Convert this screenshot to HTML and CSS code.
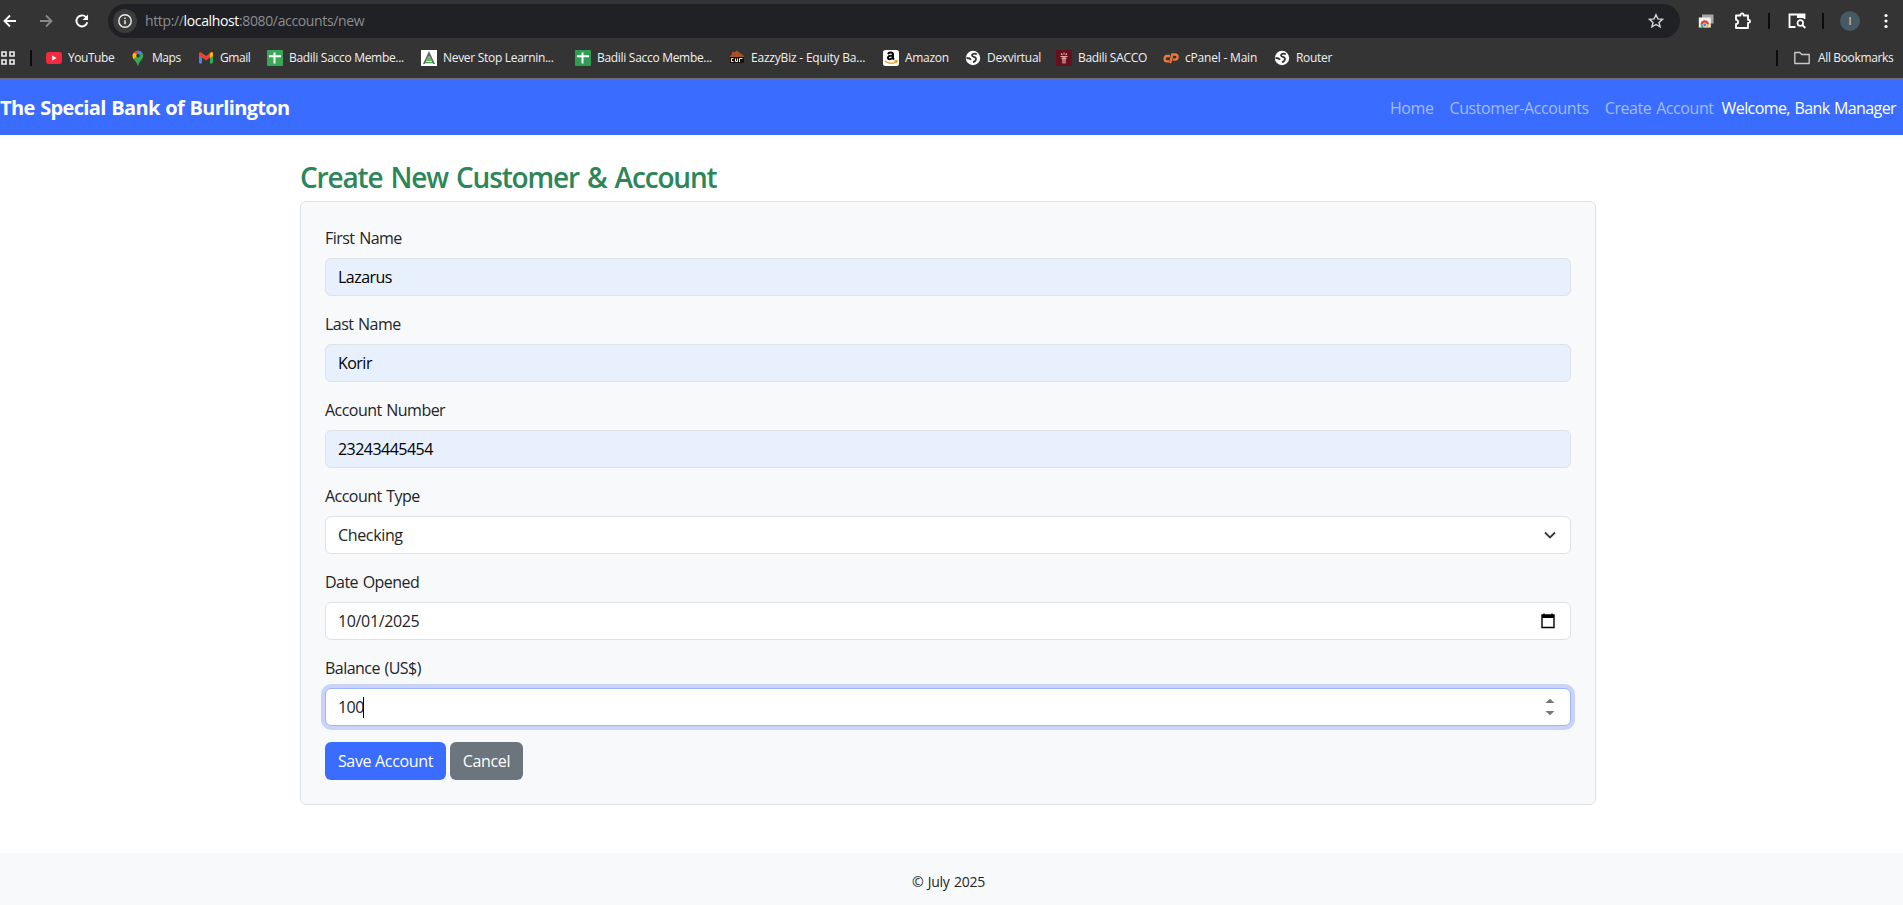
FILE: index.html
```html
<!DOCTYPE html>
<html lang="en">
<head>
<meta charset="utf-8">
<title>Create New Customer &amp; Account</title>
<link rel="stylesheet" href="styles.css">
</head>
<body>
<header class="chrome">
  <div class="toolbar">
    <svg class="tool-back" width="16" height="16" viewBox="0 0 16 16"><path d="M14 8H3M8 2.500 2.500 8 8 13.500" fill="none" stroke="#fff" stroke-width="1.800"/></svg>
    <svg class="tool-forward" width="16" height="16" viewBox="0 0 16 16"><path d="M2 8h11M8 2.500 13.500 8 8 13.500" fill="none" stroke="#8a8a8a" stroke-width="1.800"/></svg>
    <svg class="tool-reload" width="16" height="16" viewBox="0 0 16 16"><path d="M13.300 9.200A5.500 5.500 0 1 1 12 4.200L13.500 5.700" fill="none" stroke="#fff" stroke-width="1.900"/><path d="M14 1.500V7H8.500z" fill="#fff"/></svg>
    <div class="address">
      <span class="site-info"><svg width="16" height="16" viewBox="0 0 16 16"><circle cx="8" cy="8" r="6.200" fill="none" stroke="#eee" stroke-width="1.400"/><path d="M8 7.200v4M8 4.500v1.500" stroke="#eee" stroke-width="1.500"/></svg></span>
      <span class="url">http://<b>localhost</b>:8080/accounts/new</span>
      <svg class="star" width="16" height="16" viewBox="0 0 16 16"><path d="M8 1.700 9.900 5.900 14.500 6.300 11 9.400 12.100 13.900 8 11.500 3.900 13.900 5 9.400 1.500 6.300 6.100 5.900z" fill="none" stroke="#d5d5d5" stroke-width="1.400"/></svg>
    </div>
    <div class="tools">
      <svg width="16" height="16" viewBox="0 0 16 16"><path d="M4 1.500h11.500v9H4z" fill="#a5a5a5"/><path d="M.8 4.500h12v10h-12z" fill="#f1f1f1"/><path d="M2.500 11.500a4.300 4.300 0 0 1 8.600 0z" fill="#e34133"/><path d="M2.500 11.500h2.300l1.200 3H3.500z" fill="#34a853"/><path d="M8.800 11.500h2.300l-1 3H7.500z" fill="#fbbc04"/><circle cx="6.800" cy="11.900" r="1.900" fill="#4285f4" stroke="#fff" stroke-width=".6"/></svg>
      <svg class="tool-extensions" width="18" height="18" viewBox="0 0 18 18"><path d="M2 3.500h4.500V3a1.600 1.600 0 0 1 3.200 0v.5H14v4.300h.6a1.500 1.500 0 0 1 0 3H14V16H2v-4a2.100 2.100 0 0 0 0-4.200z" fill="none" stroke="#fff" stroke-width="1.800" stroke-linejoin="round"/></svg>
      <i class="divider before-search"></i>
      <svg class="tool-search" width="18" height="16" viewBox="0 0 18 16"><path d="M7.500 14H1.500V1.500h15V6" fill="none" stroke="#fff" stroke-width="1.800"/><path d="M9 1h8v4H9z" fill="#fff"/><circle cx="12.300" cy="10" r="2.800" fill="none" stroke="#fff" stroke-width="1.700"/><path d="m14.300 12 3 3" stroke="#fff" stroke-width="1.800"/></svg>
      <i class="divider before-avatar"></i>
      <span class="avatar">I</span>
      <svg class="tool-menu" width="4" height="16" viewBox="0 0 4 16"><g fill="#fff"><circle cx="2" cy="2.500" r="1.600"/><circle cx="2" cy="8" r="1.600"/><circle cx="2" cy="13.500" r="1.600"/></g></svg>
    </div>
  </div>
  <div class="bookmarks">
    <svg class="apps" width="16" height="16" viewBox="0 0 16 16"><path d="M2 2h4v4H2zM10 2h4v4h-4zM2 10h4v4H2zM10 10h4v4h-4z" fill="none" stroke="#eee" stroke-width="1.600"/></svg>
    <i class="divider"></i>
    <div class="bookmark-list">
      <span class="bm"><svg width="16" height="16" viewBox="0 0 16 16"><rect y="2" width="16" height="12" rx="3" fill="#f3293f"/><path d="m6.200 5.500 4.500 2.500-4.500 2.500z" fill="#fff"/></svg><span class="narrow">YouTube</span></span>
      <span class="bm bm-maps"><svg width="12" height="16" viewBox="0 0 12 16"><path d="M6 .5A5.300 5.300 0 0 0 1.900 2.400L6 6z" fill="#ea4335"/><path d="M6 .5a5.300 5.300 0 0 1 4.600 2.600L6 7z" fill="#4285f4"/><path d="M1.900 2.400A5.300 5.300 0 0 0 1.500 9L6 5z" fill="#fbbc04"/><path d="M10.600 3.100A5.500 5.500 0 0 1 11.200 6.500C10.500 10 7.500 10.500 6.500 15.500h-1C5 12.500 3 11 1.500 9z" fill="#34a853"/><path d="M3 4 1.500 9 6 6z" fill="#fbbc04"/><circle cx="6" cy="5.700" r="1.800" fill="#263238"/></svg><span class="narrow">Maps</span></span>
      <span class="bm"><svg width="16" height="16" viewBox="0 0 16 16"><path d="M1 3.500 4 5v8.500H2a1 1 0 0 1-1-1z" fill="#4285f4"/><path d="M15 3.500 12 5v8.500h2a1 1 0 0 0 1-1z" fill="#34a853"/><path d="M1 3.500C1 2 3 2 4 3l4 3 4-3c1-1 3-1 3 .5V6l-3 1.500L8 10.500 4 7.500 1 6z" fill="#ea4335"/><path d="M12 3c1-1 3-1 3 .5V6l-3 2z" fill="#fbbc04"/></svg><span class="narrow">Gmail</span></span>
      <span class="bm"><svg width="16" height="16" viewBox="0 0 16 16"><rect width="16" height="16" rx="1" fill="#3aa757"/><path d="M7.500 2.500v11M2 6.300h12" stroke="#fff" stroke-width="2"/></svg><span>Badili Sacco Membe...</span></span>
      <span class="bm"><svg width="16" height="16" viewBox="0 0 16 16"><path d="M0 0h16v16H0z" fill="#fff"/><path d="m8 1 6 13H2z" fill="#666"/><path d="M8 6v4M5 11.500h6M4 13.500h8" stroke="#fff" stroke-width=".8"/><path d="m6 8 2-2 2 2 1 3H5z" fill="#6ab46a"/><path d="M4 12.500h8" stroke="#4c9b50"/></svg><span>Never Stop Learnin...</span></span>
      <span class="bm"><svg width="16" height="16" viewBox="0 0 16 16"><rect width="16" height="16" rx="1" fill="#2f9e55"/><path d="M7.500 2.500v11M2 6.300h12" stroke="#fff" stroke-width="2"/></svg><span>Badili Sacco Membe...</span></span>
      <span class="bm"><svg width="16" height="16" viewBox="0 0 16 16"><path d="m1 6 2-1.800V2h2v.5L8 .5 15 6v1H1z" fill="#a65223"/><path d="M1 7h14v6H1z" fill="#17110e"/><path d="M4.500 8.500H2.500v3h2M6.500 8.500v3h2v-3M10.500 12V8.500h3" fill="none" stroke="#eee"/></svg><span class="wide">EazzyBiz - Equity Ba...</span></span>
      <span class="bm"><svg width="16" height="16" viewBox="0 0 16 16"><rect width="16" height="16" rx="2.500" fill="#fff"/><path d="M5 4.200C5.500 2 10 1.700 10 4.500v4l1 1.200M10 5.500C3.500 5.300 4.200 9.300 6.500 9.300 8.500 9.300 10 8 10 6" fill="none" stroke="#000" stroke-width="1.900"/><path d="M2 11q6 4.500 11.500.5M11.500 10.800l2.500-.3-.5 2.300" fill="none" stroke="#f29a1f" stroke-width="1.300"/></svg><span>Amazon</span></span>
      <span class="bm"><svg width="16" height="16" viewBox="0 0 16 16"><circle cx="8" cy="8" r="7.200" fill="#fff"/><path d="M11.800 4.200C9.500 3 6.800 3.800 7 5.500c.2 1.800 4 1 4 3.200 0 1.500-1 3-3 3.300M1.500 8c2 0 3.500.3 4.500 1.800" fill="none" stroke="#343434" stroke-width="1.800"/></svg><span>Dexvirtual</span></span>
      <span class="bm"><svg width="16" height="16" viewBox="0 0 16 16"><path d="M0 0h16v16H0z" fill="#64101e"/><path d="M5 3.500 6.500 5M8 2.500v2M11 3.500 9.500 5M4.500 6.500h7M7 6v7.500M9 6v7.500M5.500 8.500h5" stroke="#e9a9a9" stroke-width="1.200"/></svg><span>Badili SACCO</span></span>
      <span class="bm"><svg width="16" height="16" viewBox="0 0 16 16"><path d="M7 6H4.300a2.700 2.700 0 0 0 0 5.400H6M7.200 13 9.300 4.500H12a2.600 2.600 0 0 1 0 5.200H9.800" fill="none" stroke="#f1763b" stroke-width="2.300"/></svg><span class="wide">cPanel - Main</span></span>
      <span class="bm"><svg width="16" height="16" viewBox="0 0 16 16"><circle cx="8" cy="8" r="7.200" fill="#fff"/><path d="M11.800 4.200C9.500 3 6.800 3.800 7 5.500c.2 1.800 4 1 4 3.200 0 1.500-1 3-3 3.300M1.500 8c2 0 3.500.3 4.500 1.800" fill="none" stroke="#343434" stroke-width="1.800"/></svg><span>Router</span></span>
    </div>
    <i class="divider"></i>
    <span class="bm all"><svg width="18" height="16" viewBox="0 0 18 16"><path d="M1.800 2.500h5l2 2h7.400v9H1.800z" fill="none" stroke="#c8c8c8" stroke-width="1.400" stroke-linejoin="round"/></svg><span>All Bookmarks</span></span>
  </div>
</header>
<nav class="navbar">
  <a class="brand">The Special Bank of Burlington</a>
  <div class="links"><a>Home</a><a>Customer-Accounts</a><a>Create Account</a></div>
  <span class="welcome">Welcome, Bank Manager</span>
</nav>
<main class="content">
  <h1>Create New Customer &amp; Account</h1>
  <form class="card">
    <label>First Name</label>
    <div class="control filled">Lazarus</div>
    <label>Last Name</label>
    <div class="control filled">Korir</div>
    <label>Account Number</label>
    <div class="control filled">23243445454</div>
    <label>Account Type</label>
    <div class="control select">Checking<svg class="chevron" width="16" height="16" viewBox="0 0 16 16"><path d="m3 5.500 5 5 5-5" fill="none" stroke="#343a40" stroke-width="1.800"/></svg></div>
    <label>Date Opened</label>
    <div class="control date">10/01/2025<svg class="calendar" width="16" height="16" viewBox="0 0 16 16"><path d="M2 2h12v12.500H2zM4 .5v2M12 .5v2" fill="none" stroke="#000" stroke-width="1.400"/><path d="M2 2h12v3H2z"/></svg></div>
    <label>Balance (US$)</label>
    <div class="control focused">100<i class="caret"></i><svg class="spinner" width="10" height="18" viewBox="0 0 10 18"><path d="m5 .8 4.500 4.200h-9zM5 17.200l4.500-4.200h-9z" fill="#777"/></svg></div>
    <div class="actions"><button type="button" class="save">Save Account</button><button type="button" class="cancel">Cancel</button></div>
  </form>
</main>
<footer class="footer">© July 2025</footer>
</body>
</html>
```
FILE: styles.css
```css
* { box-sizing: border-box; }
body { margin: 0; height: 905px; overflow: hidden; display: flex; flex-direction: column; background: #fff; color: #212529; font: 16px/24px "Open Sans", sans-serif; letter-spacing: -0.53px; word-spacing: 1px; }
svg { display: block; flex: none; }
.chrome { height: 79px; flex: none; background: #343434; border-bottom: 1px solid #6b6e78; color: #f1f1f1; letter-spacing: -0.3px; word-spacing: 0; }
.toolbar { display: flex; align-items: center; height: 42px; padding-left: 2px; }
.tool-forward { margin-left: 20px; }
.tool-reload { margin-left: 20px; }
.address { display: flex; align-items: center; width: 1572px; height: 34px; margin-left: 18px; padding: 0 16px 0 5px; border-radius: 17px; background: #202124; }
.site-info { display: grid; place-items: center; width: 24px; height: 24px; border-radius: 50%; background: #3b3b3c; }
.url { margin-left: 8px; color: #8c8d8f; font-size: 14px; letter-spacing: -0.36px; }
.url b { color: #fff; font-weight: 400; }
.star { margin-left: auto; }
.tools { display: flex; align-items: center; padding-left: 18px; }
.tool-extensions { margin-left: 20px; }
.before-search, .before-avatar { margin-left: 16px; }
.tool-search { margin-left: 18px; }
.divider { width: 2px; height: 16px; background: #0c0c0c; flex: none; }
.avatar { width: 20px; height: 20px; margin-left: 16px; border-radius: 50%; background: #455a64; color: #d9e0e3; font-size: 11px; line-height: 20px; text-align: center; }
.tool-menu { margin-left: 24px; }
.bookmarks { display: flex; align-items: center; height: 32px; }
.bookmarks .divider { margin-left: 14px; }
.bookmark-list { display: grid; grid-template-columns: 86px 66px 69px 154px 154px 154px 154px 82px 91px 107px 111px 80px; margin-left: 14px; width: 1716px; }
.bm { display: flex; align-items: center; gap: 6px; font-size: 12px; line-height: 16px; white-space: nowrap; }
.bm-maps { gap: 8px; }
.narrow { letter-spacing: -0.45px; }
.wide { letter-spacing: -0.2px; }
.all { margin-left: 15px; gap: 7px; letter-spacing: -0.36px; }
.navbar { display: flex; align-items: center; height: 56px; flex: none; padding: 1px 7px 0 0; background: #3a6cff; color: #fff; }
.brand { font-size: 20px; font-weight: 700; letter-spacing: -0.65px; }
.links { display: flex; gap: 16px; margin-left: auto; color: #a2bbff; letter-spacing: -0.42px; }
.welcome { margin-left: 8px; letter-spacing: -0.6px; }
.content { width: 1296px; margin: 25px 0 0 300px; }
h1 { margin: 0 0 7px; color: #2c8658; font-size: 28px; line-height: 34px; font-weight: 600; letter-spacing: -1.17px; word-spacing: 2px; }
.card { display: block; height: 604px; padding: 24px; border: 1px solid #dee2e6; border-radius: 6px; background: #f8f9fa; }
label { display: block; margin-bottom: 8px; }
.control { display: flex; align-items: center; height: 38px; margin-bottom: 16px; padding: 0 12px; border: 1px solid #dee2e6; border-radius: 6px; background: #fff; }
.filled { background: #e8f0fe; color: #000; }
.focused { border-color: #9db6f8; box-shadow: 0 0 0 4px #c9d4f8; }
.caret { width: 1px; height: 21px; margin-left: -1px; background: #000; }
.chevron, .calendar, .spinner { margin-left: auto; }
.calendar { margin-right: 2px; }
.spinner { margin-right: 3px; }
.select, .date { letter-spacing: -0.35px; }
.actions { display: flex; gap: 4px; }
button { height: 38px; padding: 0; border: 0; border-radius: 6px; color: #fff; font: inherit; letter-spacing: -0.34px; word-spacing: 0; }
.save { width: 121px; background: #3a6cff; }
.cancel { width: 73px; background: #6c757d; }
.footer { height: 52px; margin-top: auto; padding: 17px 6px 0 0; background: #f8f9fa; font-size: 14px; letter-spacing: -0.25px; text-align: center; }
```
